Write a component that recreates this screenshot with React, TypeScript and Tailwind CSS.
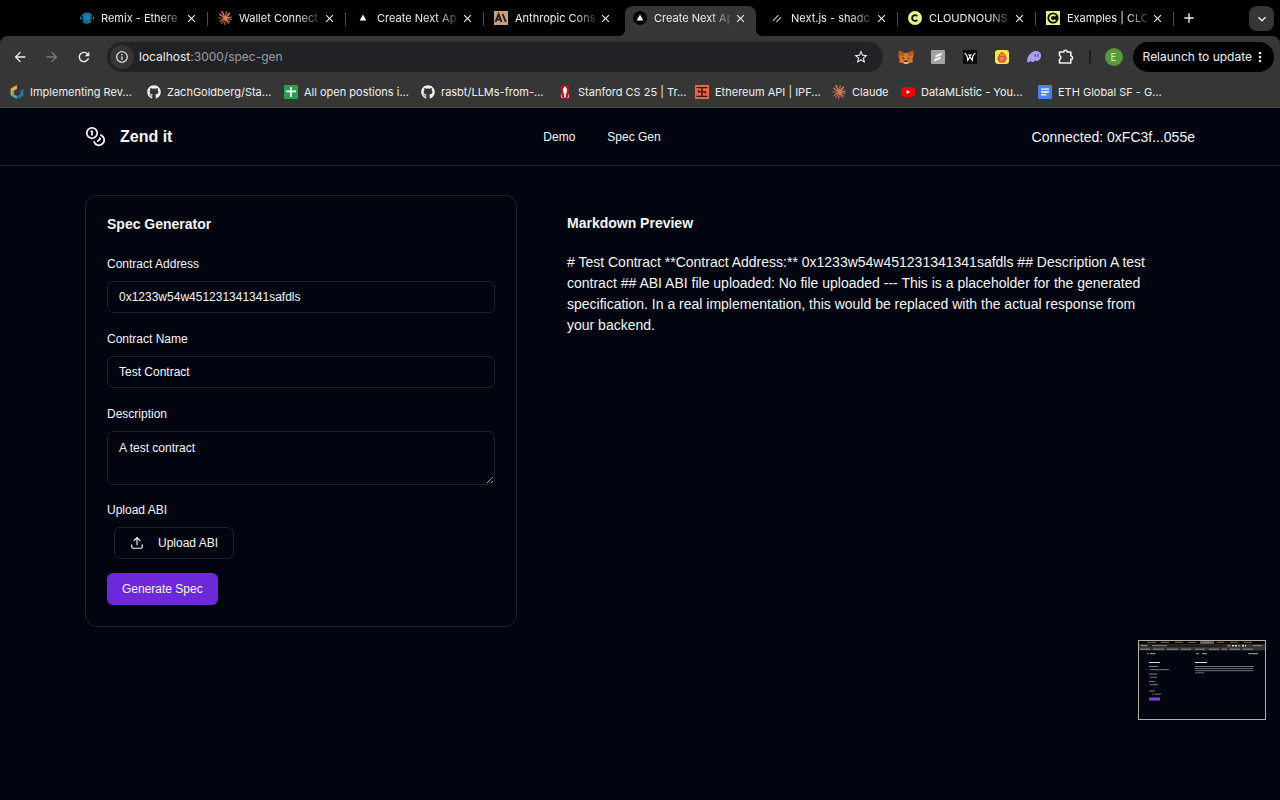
import React from "react";
import { FaGithub } from "react-icons/fa";
import { SiClaude } from "react-icons/si";
import { MdArrowBack, MdArrowForward, MdRefresh, MdInfoOutline, MdStarBorder, MdClose, MdAdd, MdExpandMore, MdMoreVert } from "react-icons/md";
import { Coins, Upload } from "lucide-react";

const RemixLogo = () => (
  <svg viewBox="0 0 14 14" className="size-3.5">
    <circle cx="7" cy="7" r="5" fill="#0b4f6c" />
    <path d="M2.5 5a5 5 0 0 1 9 0M3 10a5 5 0 0 0 8 0" stroke="#1c7da6" strokeWidth="1.4" fill="none" />
    <circle cx="7" cy="6.8" r="3.3" fill="#1b83ad" />
    <path d="M.6 5.5v3M13.4 5.5v3" stroke="#1c7da6" strokeWidth="1.2" />
  </svg>
);

const Burst = () => <SiClaude className="size-3.5 text-[#d97757]" />;

const Triangle = () => (
  <svg viewBox="0 0 14 14" className="size-3.5">
    <circle cx="7" cy="7" r="7" fill="#000" />
    <path d="M7 3.6l3.3 6H3.7z" fill="#fff" />
  </svg>
);

const AnthropicMark = () => (
  <svg viewBox="0 0 14 14" className="size-3.5">
    <rect width="14" height="14" fill="#cc9b7a" />
    <path d="M1.6 11L4.6 3.4 7.6 11M2.8 8.6h3.6M8.6 3l3.2 8" stroke="#1f1f1e" strokeWidth="1.9" fill="none" />
  </svg>
);

const Slashes = () => (
  <svg viewBox="0 0 14 14" className="size-3.5">
    <path d="M3.4 9.4l4.8-5M6.8 10.6l3.8-4" stroke="#c8c8c8" strokeWidth="1.1" strokeLinecap="round" />
  </svg>
);

const CloudC = ({ square = false }: { square?: boolean }) => (
  <svg viewBox="0 0 14 14" className="size-3.5">
    {square ? <rect width="14" height="14" fill="#e3f48c" /> : <circle cx="7" cy="7" r="7" fill="#e3f48c" />}
    {square && <circle cx="7" cy="7" r="5.6" fill="#111" />}
    <path d="M9.3 5.2a2.9 2.9 0 1 0 0 3.6" stroke={square ? "#e3f48c" : "#111"} strokeWidth="1.9" fill="none" />
  </svg>
);

const ColorHex = () => (
  <svg viewBox="0 0 14 14" className="size-3.5">
    <path d="M7 0v4L3.800 5.800v1L.6 5.400V3.600z" fill="#f0a43a" />
    <path d="M.6 5.400l3.200 1.400v2.400L.6 10.600z" fill="#8fc060" />
    <path d="M.6 10.600l3.200-1.400L7 11v3z" fill="#43b4a4" />
    <path d="M8 0l5.400 3.400-3.200 1.800L8 4z" fill="#26343c" />
    <path d="M13.400 3.800v6.800L8 14v-3.400l2.400-1.400V5.600z" fill="#2b6ea8" />
  </svg>
);

const Sheet = () => (
  <svg viewBox="0 0 14 14" className="size-3.5">
    <rect width="14" height="14" rx="1.2" fill="#2e9e52" />
    <path d="M2 6.4h10M7 2v10" stroke="#fff" strokeWidth="1.6" />
  </svg>
);

const Stanford = () => (
  <svg viewBox="0 0 14 14" className="size-3.5">
    <path d="M4 0h6l1.500 1.500v3L10.500 6l1 1.500v4.500L10 14H4l-1.500-2V7.500l1-1.500-1-1.500v-3z" fill="#a31f22" />
    <path d="M3.500 9.500v3h1.200M10.500 9.500v3H9.300" stroke="#e9c9c9" strokeWidth=".8" fill="none" />
    <path d="M7 1.200L9 4 8.500 8.500H7.800v4H6.200v-4H5.500L5 4z" fill="#fff" />
  </svg>
);

const IpfsGrid = () => (
  <svg viewBox="0 0 14 14" className="size-3.5">
    <rect width="14" height="14" fill="#e8694a" />
    <path d="M1.5 2.6h11M7 2.6v8.8M1.5 11.4h11M3 6.8h8M3.5 5v1.8M10.5 6.8V9" stroke="#2b1712" strokeWidth="1.3" fill="none" />
  </svg>
);

const Play = () => (
  <svg viewBox="0 0 14 14" className="size-3.5">
    <rect y="2" width="14" height="10" rx="2.4" fill="#f00000" />
    <path d="M5.6 4.9L9.2 7 5.6 9.1z" fill="#fff" />
  </svg>
);

const Doc = () => (
  <svg viewBox="0 0 14 14" className="size-3.5">
    <rect width="14" height="14" rx="1" fill="#4a80e8" />
    <path d="M3 4.2h8M3 7h8M3 9.8h5.4" stroke="#fff" strokeWidth="1.3" />
  </svg>
);

const Fox = () => (
  <svg viewBox="0 0 16 16" className="size-4">
    <path d="M1 1.5L6.5 4h3L15 1.5l.6 5-1.2 3.6.4 3.4-3.8.4L9 15H7l-2-1.1-3.8-.4.4-3.4L.4 6.5z" fill="#d9762f" />
    <path d="M1 1.5L6.5 4 6 7.5.6 6.5zM15 1.5L9.5 4l.5 3.5 5.4-1z" fill="#b3592a" />
    <path d="M3.6 8.4l2.6.6-.6 1.2zM12.4 8.4l-2.6.6.6 1.2z" fill="#2a2a2a" />
    <path d="M6.2 11.6h3.6L9.4 13H6.6z" fill="#2a2a2a" />
    <path d="M5 13.9l1.6-.9h2.8l1.6.9L9 15H7z" fill="#cdbdb2" />
  </svg>
);

const GraySlash = () => (
  <svg viewBox="-1 -1 16 16" className="size-4">
    <rect width="14" height="14" rx="1" fill="#a3a3a3" />
    <path d="M10.5 2.8L4.500 5.400v2.200l6-2.600zM9.500 6.600l-6 2.600v2.200l6-2.600z" fill="#fff" />
  </svg>
);

const Wings = () => (
  <svg viewBox="-1 -1 16 16" className="size-4">
    <rect width="14" height="14" fill="#0c0c0c" />
    <path d="M1.5 3.5C4 3.6 4.500 7 4.800 10.200L7 6.600l2.200 3.600C9.500 7 10 3.600 12.500 3.500M5.600 4.200L7 6.400l1.400-2.200" stroke="#fff" strokeWidth="1.2" fill="none" />
  </svg>
);

const Hand = () => (
  <svg viewBox="-1 -1 16 16" className="size-4">
    <rect width="14" height="14" rx="3" fill="#f3ea52" />
    <path d="M2.500 6.500h1.200V4h1.500V2.700h1.100V2h1.400v.7h1.100V4h1.500v2.500h1.200v3L9.500 12.500h-5l-2-3z" fill="#e0512f" />
    <path d="M5.400 4.500V6M7 3.800V6M8.600 4.500V6M4.500 8h5M5.200 10h3.600" stroke="#f6d8a0" strokeWidth=".7" />
  </svg>
);

const Ghost = () => (
  <svg viewBox="0 0 16 16" className="size-4">
    <path d="M1 12C1.500 6.500 5.500 2 10 2c3.500 0 5.500 2.300 5 5.500-.4 2.800-2.500 4.500-4.200 4.500-.9 0-1.200-.6-1.200-1-.8 1.200-2 2-3.100 2-.8 0-1.300-.5-1.300-1.300C4 12.800 1 14.500 1 12z" fill="#ab9ff2" />
    <path d="M9.300 5.600v1.800M12 5.600v1.800" stroke="#4a4270" strokeWidth="1.1" strokeLinecap="round" />
  </svg>
);

const Puzzle = () => (
  <svg viewBox="0 0 16 16" className="size-4" fill="none" stroke="#f0f0f0" strokeWidth="1.6" strokeLinejoin="round">
    <path d="M1.500 3h4.300a1.700 1.700 0 0 1 3.400 0h3.600v4a1.700 1.700 0 0 1 0 3.400V14H1.500v-3.800a1.800 1.800 0 0 0 0-3.500z" />
  </svg>
);

const tabs = [
  { title: "Remix - Ethere", icon: <RemixLogo /> },
  { title: "Wallet Connect", icon: <Burst /> },
  { title: "Create Next Ap", icon: <Triangle /> },
  { title: "Anthropic Cons", icon: <AnthropicMark /> },
  { title: "Create Next Ap", icon: <Triangle />, active: true },
  { title: "Next.js - shadc", icon: <Slashes /> },
  { title: "CLOUDNOUNS", icon: <CloudC /> },
  { title: "Examples | CLO", icon: <CloudC square /> },
];

const bookmarks = [
  { label: "Implementing Rev...", icon: <ColorHex />, width: "w-[137px]" },
  { label: "ZachGoldberg/Sta...", icon: <FaGithub className="size-3.5" />, width: "w-[137px]" },
  { label: "All open postions i...", icon: <Sheet />, width: "w-[137px]" },
  { label: "rasbt/LLMs-from-...", icon: <FaGithub className="size-3.5" />, width: "w-[137px]" },
  { label: "Stanford CS 25 | Tr...", icon: <Stanford />, width: "w-[137px]" },
  { label: "Ethereum API | IPF...", icon: <IpfsGrid />, width: "w-[137px]" },
  { label: "Claude", icon: <Burst />, width: "w-[69px]" },
  { label: "DataMListic - You...", icon: <Play />, width: "w-[137px]" },
  { label: "ETH Global SF - G...", icon: <Doc />, width: "w-[137px]" },
];

function TabStrip() {
  return (
    <div className="flex h-9 items-end bg-black pl-[70px] pr-1.5">
      {tabs.map((tab, i) => (
        <div key={i} className={`relative flex h-[30px] w-[138px] shrink-0 ${tab.active ? "pl-[3px] pr-1" : ""}`}>
          <div
            className={
              tab.active
                ? "flex flex-1 items-center rounded-t-lg bg-[#363636] pb-1.5 pl-2"
                : "flex flex-1 items-center pb-1.5 pl-2.5"
            }
          >
            <span className="shrink-0">{tab.icon}</span>
            <span className={`ml-[7px] shrink-0 whitespace-nowrap text-[11px] leading-4 text-[#ececec] [mask-image:linear-gradient(to_right,black_75%,#0003)] ${tab.active ? "w-[76px]" : "w-20"}`}>
              {tab.title}
            </span>
            <button aria-label="Close tab" className="ml-1 shrink-0 text-[#f0f0f0]">
              <MdClose className="size-[13px]" />
            </button>
          </div>
          {tab.active && (
            <>
              <svg viewBox="0 0 6 6" className="absolute -left-[3px] bottom-0 size-1.5"><path d="M6 0v6H0a6 6 0 0 0 6-6z" fill="#363636" /></svg>
              <svg viewBox="0 0 6 6" className="absolute -right-0.5 bottom-0 size-1.5"><path d="M0 0v6h6a6 6 0 0 1-6-6z" fill="#363636" /></svg>
            </>
          )}
          {!tab.active && i !== 3 && <span className="absolute right-0 top-1.5 h-3.5 w-px bg-[#4a4a4a]" />}
        </div>
      ))}
      <button aria-label="New tab" className="mb-2.5 ml-[7px] text-[#f0f0f0]">
        <MdAdd className="size-4" />
      </button>
      <button aria-label="Search tabs" className="mb-[5px] ml-auto flex size-[25px] items-center justify-center rounded-lg bg-[#363636] text-[#f0f0f0]">
        <MdExpandMore className="size-4" />
      </button>
    </div>
  );
}

function Toolbar() {
  return (
    <div className="flex h-[41px] items-center rounded-t-lg bg-[#363636] pl-3 pr-1.5 text-[#f0f0f0]">
      <button aria-label="Back"><MdArrowBack className="size-4" /></button>
      <button aria-label="Forward" className="ml-4 text-[#7d7d7d]"><MdArrowForward className="size-4" /></button>
      <button aria-label="Reload" className="ml-4"><MdRefresh className="size-4" /></button>
      <div className="ml-[15px] flex h-[30px] flex-1 items-center rounded-full bg-[#212226] pl-[3px] pr-3.5">
        <button aria-label="Site information" className="flex size-6 items-center justify-center rounded-full bg-[#363636]">
          <MdInfoOutline className="size-3.5" />
        </button>
        <span className="ml-[5px] text-xs text-[#9b9ca0]">
          <span className="text-[#ececec]">localhost</span>:3000/spec-gen
        </span>
        <button aria-label="Bookmark this page" className="ml-auto"><MdStarBorder className="size-4" /></button>
      </div>
      <div className="ml-[15px] flex items-center gap-4">
        <Fox />
        <GraySlash />
        <Wings />
        <Hand />
        <Ghost />
        <Puzzle />
      </div>
      <span className="ml-[15px] h-3.5 w-0.5 bg-[#1d1d1d]" />
      <button aria-label="Profile" className="ml-3.5 size-[18px] rounded-full bg-[#549a37] text-[10px] leading-[18px] text-[#dff0d5]">E</button>
      <button className="ml-2.5 flex h-[30px] items-center rounded-full bg-black pl-2.5 pr-1.5 text-xs">
        Relaunch to update
        <MdMoreVert className="size-4" />
      </button>
    </div>
  );
}

function Bookmarks() {
  return (
    <nav className="flex h-[31px] items-center overflow-hidden border-b border-[#4a4b4d] bg-[#363636] pl-2.5 text-[11px] leading-4 text-[#f0f0f0]">
      {bookmarks.map((b) => (
        <a key={b.label} href="#" className={`${b.width} flex shrink-0 items-center gap-1.5 whitespace-nowrap`}>
          <span className="shrink-0">{b.icon}</span>
          {b.label}
        </a>
      ))}
    </nav>
  );
}

function SpecForm() {
  const label = "block text-xs";
  const field = "mt-[9px] block w-full rounded-md border border-[#1b212d] bg-transparent px-[11px] text-xs outline-none";
  return (
    <form className="rounded-xl border border-[#1b212d] px-[21px] pb-[21px] pt-[19px]" onSubmit={(e) => e.preventDefault()}>
      <h2 className="text-sm font-bold leading-[18px]">Spec Generator</h2>
      <label htmlFor="address" className={`mt-[23px] ${label}`}>Contract Address</label>
      <input id="address" defaultValue="0x1233w54w451231341341safdls" className={`h-8 ${field}`} />
      <label htmlFor="name" className={`mt-[18px] ${label}`}>Contract Name</label>
      <input id="name" defaultValue="Test Contract" className={`h-8 ${field}`} />
      <label htmlFor="description" className={`mt-[18px] ${label}`}>Description</label>
      <textarea id="description" defaultValue="A test contract" className={`h-[54px] py-2 ${field}`} />
      <p className={`mt-[17px] ${label}`}>Upload ABI</p>
      <button type="button" className="ml-[7px] mt-[9px] flex h-8 items-center rounded-md border border-[#1b212d] px-[15px] text-xs">
        <Upload className="mr-3.5 size-3.5" />
        Upload ABI
      </button>
      <button type="submit" className="mt-3.5 block h-8 rounded-md bg-[#6d28d9] px-[15px] text-xs">Generate Spec</button>
    </form>
  );
}

function Thumbnail() {
  return (
    <svg viewBox="0 0 128 80" className="absolute bottom-20 right-3.5 h-20 w-32">
      <rect width="128" height="80" fill="#02050f" />
      <rect width="128" height="4" fill="#050505" />
      <rect y="4" width="128" height="6.500" fill="#343434" />
      <rect x="62" y="1" width="14" height="3" fill="#555" />
      <path d="M11 5.700h77" stroke="#1e1e20" strokeWidth="2.400" />
      <path d="M9 2.300h9M23 2.300h8M37 2.300h8M50 2.300h8M64 2.500h9M79 2.300h7M92 2.300h8M106 2.300h8" stroke="#888" strokeWidth=".8" />
      <path d="M3 5.700h6M14 5.700h15M115 5.700h9M2 9.200h10M15 9.200h11M29 9.200h11M43 9.200h10M57 9.200h10M71 9.200h10M84 9.200h5M92 9.200h10M105 9.200h10" stroke="#aaa" strokeWidth=".8" />
      <path d="M90 5.700h2M100 5.700h2" stroke="#e3743c" strokeWidth="1.600" />
      <path d="M94 5.700h2M97 5.700h2M104 5.700h2M107 5.700h1" stroke="#ddd" strokeWidth="1.400" />
      <path d="M9 13.700h1.500M12 13.700h5.500M58 13.700h3M64 13.700h5M110 13.700h10" stroke="#bbb" strokeWidth=".9" />
      <path d="M11 22.500h11M57 22.500h12" stroke="#ddd" strokeWidth="1" />
      <path d="M11 26.500h9M12 29.700h19M11 34h8M12 37.200h7M11 41.500h6M12 44.700h8M11 51h6M14 54.200h1.500M17 54.200h6" stroke="#999" strokeWidth=".8" />
      <path d="M57 26.500h59M57 28.600h58M57 30.700h58M57 32.800h9" stroke="#888" strokeWidth=".8" />
      <rect x="11" y="57.500" width="11" height="3" rx=".5" fill="#7a45dc" />
      <rect x=".5" y=".5" width="127" height="79" fill="none" stroke="#b5b09a" />
    </svg>
  );
}

export default function App() {
  return (
    <div className="relative flex min-h-screen flex-col bg-[#02050f] font-['Liberation_Sans',Arial,sans-serif] text-[#f4f5f7]">
      <div className="bg-black font-[Inter,sans-serif]">
        <TabStrip />
        <Toolbar />
        <Bookmarks />
      </div>
      <header className="flex h-[58px] items-center justify-between border-b border-[#1b212d] px-[85px]">
        <a href="#" className="flex items-center gap-3.5 text-base font-bold">
          <Coins className="size-[21px]" />
          Zend it
        </a>
        <nav className="flex gap-8 text-xs">
          <a href="#">Demo</a>
          <a href="#">Spec Gen</a>
        </nav>
        <p className="text-sm">Connected: 0xFC3f...055e</p>
      </header>
      <main className="grid grid-cols-[432fr_628fr] gap-[50px] px-[85px] pt-[29px]">
        <SpecForm />
        <section className="pr-9 pt-[19px]">
          <h2 className="text-sm font-bold leading-[18px]">Markdown Preview</h2>
          <p className="mt-5 text-sm leading-[21px]">
            # Test Contract **Contract Address:** 0x1233w54w451231341341safdls ## Description A test contract ## ABI ABI file uploaded: No file uploaded --- This is a placeholder for the generated specification. In a real implementation, this would be replaced with the actual response from your backend.
          </p>
        </section>
      </main>
      <Thumbnail />
    </div>
  );
}
